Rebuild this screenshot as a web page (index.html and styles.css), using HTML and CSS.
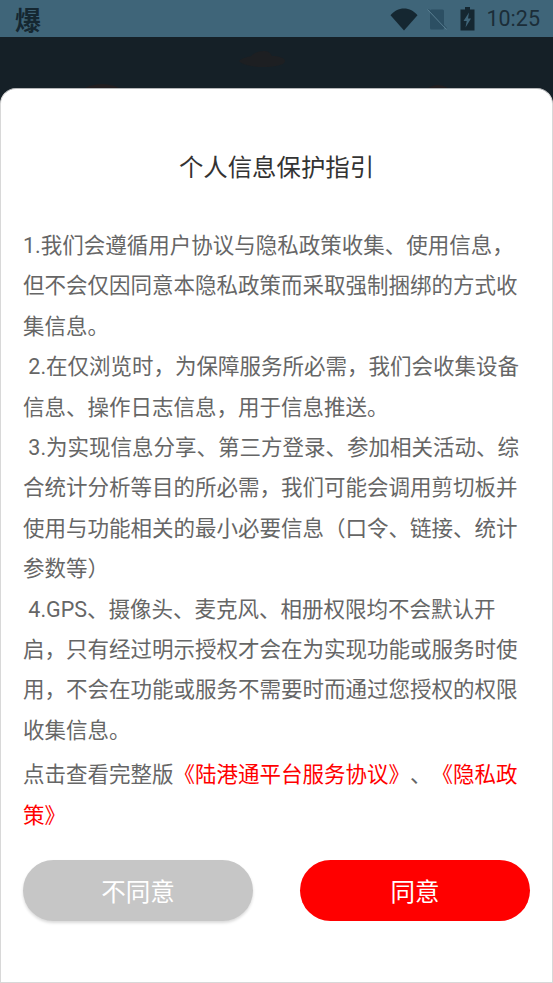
FILE: index.html
```html
<!DOCTYPE html>
<html lang="zh">
<head>
<meta charset="utf-8">
<title>个人信息保护指引</title>
<link rel="stylesheet" href="styles.css">
</head>
<body>
<div class="screen">
  <header class="status">
    <span class="notif">爆</span>
    <div class="status-right">
      <svg class="wifi" width="28" height="23" viewBox="0 0 28 23"><path d="M0.500 7.200C4 3 8.700 0.500 14 0.500s10 2.500 13.500 6.700L14 22.500z" fill="#152731"/></svg>
      <svg class="sim" width="20" height="21" viewBox="0 0 20 21"><path d="M4.500 0.500h11a1.500 1.500 0 0 1 1.500 1.500v17a1.500 1.500 0 0 1-1.500 1.500h-11A1.500 1.500 0 0 1 3 19V2a1.500 1.500 0 0 1 1.500-1.500z" fill="#2c4f63"/><path d="M0.500 0.500L19.500 20.500" stroke="#5a7f92" stroke-width="1"/><path d="M1 -0.500L20 19.500" stroke="#2c4f63" stroke-width="1"/></svg>
      <svg class="batt" width="15" height="24" viewBox="0 0 15 24"><path d="M5 0h5v2.500H14.500v21H.5V2.500H5z" fill="#152731"/><path d="M9 5.500L3.500 14h3.200L5.500 20.500 11 11.500H8z" fill="#3f6579"/></svg>
      <span class="time">10:25</span>
    </div>
  </header>
  <div class="backdrop">
    <svg class="cloud" width="48" height="18" viewBox="0 0 48 18"><path d="M1 11c3-3 9-4 12-5 3-3 8-5.500 14-5 4 0 6 3 7 5 7 0 13 2 13 5 0 4-10 6-23 6C13 17 3 14 1 11z" fill="#1d1f22"/></svg>
    <svg class="hump hump-left" width="34" height="4" viewBox="0 0 34 4"><path d="M0 4C6 1 12 0 17 0s11 1 17 4z" fill="#211e20"/></svg>
    <svg class="hump hump-right" width="20" height="3" viewBox="0 0 20 3"><path d="M0 3C4 1 7 0 10 0s6 1 10 3z" fill="#211e20"/></svg>
  </div>
  <main class="dialog">
    <h1 class="title">个人信息保护指引</h1>
    <div class="body">
      <p>1.我们会遵循用户协议与隐私政策收集、使用信息，但不会仅因同意本隐私政策而采取强制捆绑的方式收集信息。</p>
      <p>&nbsp;2.在仅浏览时，为保障服务所必需，我们会收集设备信息、操作日志信息，用于信息推送。</p>
      <p>&nbsp;3.为实现信息分享、第三方登录、参加相关活动、综合统计分析等目的所必需，我们可能会调用剪切板并使用与功能相关的最小必要信息（口令、链接、统计参数等）</p>
      <p>&nbsp;4.GPS、摄像头、麦克风、相册权限均不会默认开启，只有经过明示授权才会在为实现功能或服务时使用，不会在功能或服务不需要时而通过您授权的权限收集信息。</p>
      <p class="links">点击查看完整版<span class="red">《陆港通平台服务协议》</span>、<span class="red">《隐私政<br>策》</span></p>
    </div>
    <div class="actions">
      <button class="btn decline" type="button">不同意</button>
      <button class="btn accept" type="button">同意</button>
    </div>
  </main>
</div>
</body>
</html>
```
FILE: styles.css
```css
* { box-sizing: border-box; }
html, body { margin: 0; padding: 0; }
body {
  width: 553px;
  height: 983px;
  overflow: hidden;
  background: #152027;
  font-family: Roboto, "Noto Sans CJK SC", sans-serif;
  text-spacing-trim: space-all;
}
.screen {
  width: 553px;
  height: 983px;
  display: flex;
  flex-direction: column;
}
.status {
  height: 37px;
  flex: none;
  background: #3f6579;
  display: flex;
  align-items: center;
  justify-content: space-between;
  padding: 0 13px 0 15px;
  color: #152731;
}
.notif {
  font-size: 26px;
  font-weight: 700;
  line-height: 37px;
  font-family: "Noto Sans CJK SC", sans-serif;
}
.status-right {
  display: flex;
  align-items: center;
}
.wifi { margin-right: 9px; margin-top: 1px; }
.sim { margin-right: 13px; margin-top: 2px; }
.batt { margin-right: 11px; margin-top: 1px; }
.time {
  font-size: 21.500px;
  line-height: 37px;
  color: #1b2d38;
}
.backdrop {
  position: relative;
  height: 51px;
  flex: none;
  display: flex;
  justify-content: center;
  padding: 13px 0 0 0;
}
.cloud { margin-left: -30px; }
.hump { position: absolute; bottom: 0; }
.hump-left { left: 85px; }
.hump-right { left: 428px; }
.dialog {
  flex: 1;
  background: #fff;
  border: 1px solid #d8d8d8;
  border-top-color: #b4b6b8;
  border-radius: 16px 16px 0 0;
  padding: 0 22px;
  display: flex;
  flex-direction: column;
}
.title {
  margin: 59px 0 0;
  font-size: 24.400px;
  font-weight: 400;
  line-height: 36px;
  color: #333;
  text-align: center;
  font-family: "Noto Sans CJK SC", sans-serif;
}
.body {
  margin-top: 42px;
  font-size: 21.500px;
  line-height: 40.400px;
  color: #666;
}
.body p { margin: 0; }
.body .links { margin-top: 4px; }
.red { color: #f00; }
.actions {
  margin-top: 24px;
  display: flex;
  justify-content: space-between;
}
.btn {
  width: 230px;
  height: 61px;
  border: none;
  border-radius: 31px;
  color: #fff;
  font-size: 24.500px;
  font-family: "Noto Sans CJK SC", sans-serif;
  padding: 0;
}
.decline {
  background: #c6c6c6;
  box-shadow: 0 2px 3px rgba(0,0,0,.15);
}
.accept { background: #f00; }
```
